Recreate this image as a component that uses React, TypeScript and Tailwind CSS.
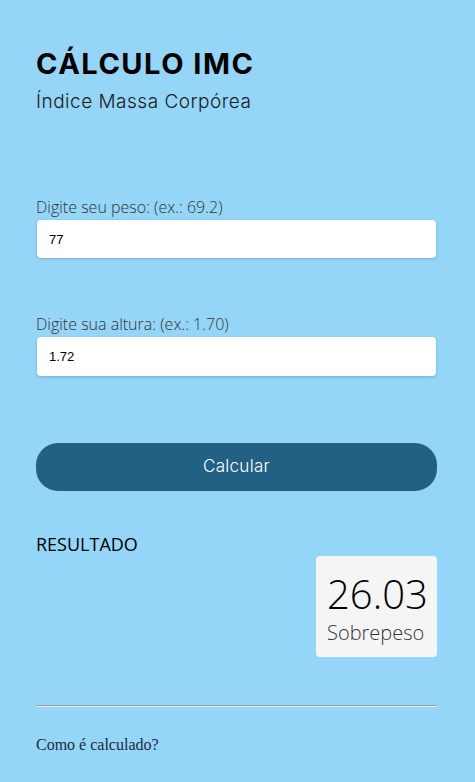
const App = () => {
  return (
    <div className="min-h-screen bg-[#95d5f7] pl-[36px] pr-[38px] pt-[46px] pb-[30px]">
      <header>
        <h1 className="text-[29px] leading-[36px] font-bold text-black font-['Inter',sans-serif] tracking-[1.5px]">
          CÁLCULO IMC
        </h1>
        <p className="mt-[8px] text-[19px] leading-[24px] text-[#1a1a1a] font-['Inter',sans-serif] font-light tracking-[0.5px]">
          Índice Massa Corpórea
        </p>
      </header>

      <form className="mt-[83px]" onSubmit={(e) => e.preventDefault()}>
        <label className="block font-['Open_Sans',sans-serif] font-light text-[16px] leading-[20px] text-[#333]">
          Digite seu peso: (ex.: 69.2)
        </label>
        <input
          type="text"
          defaultValue="77"
          className="mt-[3px] ml-[1px] block w-[399px] h-[38px] rounded-[4px] bg-white px-[12px] text-[13px] text-black font-['Liberation_Sans',sans-serif] shadow-[0_1px_3px_rgba(0,0,0,0.2)] outline-none"
        />

        <label className="mt-[56px] block font-['Open_Sans',sans-serif] font-light text-[16px] leading-[20px] text-[#333]">
          Digite sua altura: (ex.: 1.70)
        </label>
        <input
          type="text"
          defaultValue="1.72"
          className="mt-[3px] ml-[1px] block w-[399px] h-[39px] rounded-[4px] bg-white px-[12px] text-[13px] text-black font-['Liberation_Sans',sans-serif] shadow-[0_1px_3px_rgba(0,0,0,0.2)] outline-none"
        />

        <button
          type="submit"
          className="mt-[67px] w-full h-[48px] rounded-[22px] bg-[#226184] text-white text-[17px] font-['Inter',sans-serif] font-light tracking-[0.3px]"
        >
          Calcular
        </button>
      </form>

      <section className="mt-[42px]">
        <h2 className="font-['Open_Sans',sans-serif] text-[18px] leading-[23px] text-black">RESULTADO</h2>
        <div className="flex justify-end">
          <div className="w-[121px] h-[101px] rounded-[4px] bg-[#f5f5f5] px-[11px] pt-[14px] font-['Open_Sans',sans-serif] font-light">
            <div className="text-[40px] leading-[48px] text-black">26.03</div>
            <div className="mt-[3px] text-[20px] leading-[24px] text-[#333]">Sobrepeso</div>
          </div>
        </div>
      </section>

      <hr className="mt-[48px] border-t-[1px] border-b-[1px] border-t-[#a0a0a0] border-b-[#e8e8e8]" />

      <p className="mt-[26px] font-['Liberation_Serif',serif] text-[16px] text-[#1a2a3a]">
        Como é calculado?
      </p>
    </div>
  );
};

export default App;
